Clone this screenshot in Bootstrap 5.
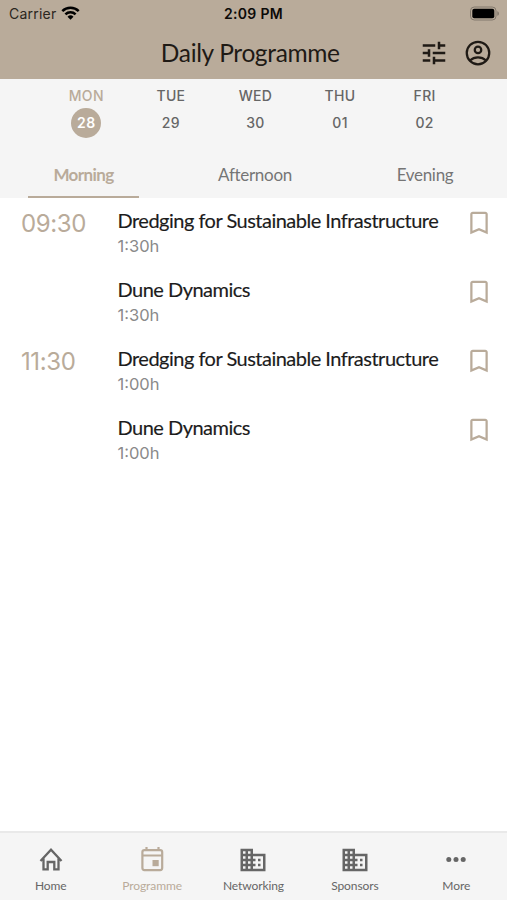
<!DOCTYPE html>
<html lang="en">
<head>
<meta charset="utf-8">
<meta name="viewport" content="width=device-width, initial-scale=1">
<title>Daily Programme</title>
<link href="https://cdn.jsdelivr.net/npm/bootstrap@5.3.0/dist/css/bootstrap.min.css" rel="stylesheet">
<style>
:root { --sand: #b9ab9a; --bar: #f5f5f5; --ink: #666; }
body { font-family: Lato, "Open Sans", sans-serif; color: #1c1c1c; background: #fff; }
svg { display: block; fill: currentColor; flex: none; }
.digits { font-family: Inter, "Liberation Sans", sans-serif; }
.top { background: var(--sand); height: 79px; color: #1f1a15; }
.status { height: 27px; font-size: 14px; line-height: 28px; color: #2b2620; padding: 0 7px 0 9px; display: grid; grid-template-columns: 1fr auto 1fr; }
.status .carrier { letter-spacing: .22px; }
.status .clock { font-weight: 600; letter-spacing: .3px; color: #0c0a08; margin-right: 2px; }
.title-row { height: 50px; display: grid; grid-template-columns: 1fr 180px 1fr; padding: 0 14.500px 0 8px; }
.title-row h1 { font-size: 24.5px; line-height: 51px; margin: 0; font-weight: 400; white-space: nowrap; letter-spacing: -.35px; }
.title-row .user { margin-left: 14px; }
.panel { background: var(--bar); height: 119px; color: var(--ink); }
.days { padding: 7px 40px 0 44px; height: 73px; }
.day { font-size: 14px; font-weight: 500; line-height: 20px; letter-spacing: .35px; }
.day .num { width: 30px; height: 30px; line-height: 30px; margin-top: 2px; border-radius: 50%; }
.day.on { color: var(--sand); }
.day.on .num { background: var(--sand); color: #fff; font-weight: 600; }
.parts { display: grid; grid-template-columns: 167px 176px 164px; height: 46px; font-size: 17px; line-height: 46px; letter-spacing: -.3px; color: #757575; }
.parts .on { color: var(--sand); font-weight: 700; width: 111px; height: 46px; border-bottom: 2px solid var(--sand); letter-spacing: -.6px; }
.item { height: 69px; padding: 10px 13px 0 21px; }
.item .at { width: 96.500px; font-size: 24px; line-height: 31px; color: var(--sand); letter-spacing: -.4px; }
.item .name { font-size: 20px; line-height: 24px; white-space: nowrap; letter-spacing: -.51px; -webkit-text-stroke: .15px; }
.item .len { font-size: 16.5px; line-height: 29px; color: #8a8a8a; }
.item svg { color: var(--sand); }
.bottom { height: 69px; background: var(--bar); border-top: 2px solid #e9e9e9; color: var(--ink); font-size: 12px; }
.bottom a { color: inherit; text-decoration: none; padding-top: 12px; line-height: 19px; width: 20%; letter-spacing: -.1px; }
.bottom a.on { color: var(--sand); }
.bottom svg { margin-bottom: 1px; }
</style>
<script src="https://cdn.jsdelivr.net/npm/bootstrap@5.3.0/dist/js/bootstrap.bundle.min.js"></script>
</head>
<body class="vh-100 d-flex flex-column overflow-hidden">
<svg class="d-none">
  <symbol id="i-bookmark" viewBox="0 0 24 24"><path d="M17 3H7c-1.100 0-2 .9-2 2v16l7-3 7 3V5c0-1.100-.9-2-2-2zm.2 15.200l-5.200-2.300-5.200 2.300V4.800h10.400z"/></symbol>
  <symbol id="i-office" viewBox="0 0 24 24"><path d="M12 7V3H2v18h20V7H12zM6 19H4v-2h2v2zm0-4H4v-2h2v2zm0-4H4V9h2v2zm0-4H4V5h2v2zm4 12H8v-2h2v2zm0-4H8v-2h2v2zm0-4H8V9h2v2zm0-4H8V5h2v2zm10 12h-8v-2h2v-2h-2v-2h2v-2h-2V9h8v10zm-2-8h-2v2h2v-2zm0 4h-2v2h2v-2z"/></symbol>
</svg>

<header class="top">
  <div class="status digits">
    <div class="d-flex align-items-center">
      <span class="carrier">Carrier</span>
      <svg class="ms-1" width="20" height="16" viewBox="0 0 20 16" style="color:#000"><g fill="none" stroke="currentColor" stroke-width="2.500"><path d="M2.300 5.200a11.600 11.600 0 0 1 16.400 0"/><path d="M5.400 8.400a7.200 7.200 0 0 1 10.200 0"/></g><path d="M10.500 13.800l-3-3.100a4.300 4.300 0 0 1 6 0z"/></svg>
    </div>
    <span class="clock">2:09 PM</span>
    <div class="d-flex justify-content-end align-items-center">
      <svg width="31" height="16" viewBox="0 0 31 16"><rect x="1.500" y="1" width="25.500" height="13" rx="3.800" fill="none" stroke="#82786c"/><rect x="3.300" y="2.800" width="22" height="9.400" rx="2" fill="#000"/><path d="M28.300 5.200c2.200.7 2.200 3.900 0 4.600z" fill="#82786c"/></svg>
    </div>
  </div>
  <div class="title-row">
    <span></span>
    <h1 class="text-center">Daily Programme</h1>
    <div class="d-flex justify-content-end align-items-center">
      <svg width="30" height="30" viewBox="0 0 24 24"><path d="M3 17v2h6v-2H3zM3 5v2h10V5H3zm10 16v-2h8v-2h-8v-2h-2v6h2zM7 9v2H3v2h4v2h2V9H7zm14 4v-2H11v2h10zm-6-4h2V7h4V5h-4V3h-2v6z"/></svg>
      <svg class="user" width="30" height="30" viewBox="0 0 24 24"><g fill="none" stroke="currentColor" stroke-width="1.800"><circle cx="12" cy="12" r="9"/><circle cx="12" cy="9.500" r="2.600"/><path d="M5.600 18c1.800-1.700 4-2.500 6.400-2.500s4.600.8 6.400 2.500"/></g></svg>
    </div>
  </div>
</header>

<section class="panel">
  <div class="days digits d-flex text-center">
    <div class="day on flex-fill w-100"><div>MON</div><div class="num mx-auto">28</div></div>
    <div class="day flex-fill w-100"><div>TUE</div><div class="num mx-auto">29</div></div>
    <div class="day flex-fill w-100"><div>WED</div><div class="num mx-auto">30</div></div>
    <div class="day flex-fill w-100"><div>THU</div><div class="num mx-auto">01</div></div>
    <div class="day flex-fill w-100"><div>FRI</div><div class="num mx-auto">02</div></div>
  </div>
  <div class="parts text-center">
    <div class="on mx-auto">Morning</div>
    <div>Afternoon</div>
    <div>Evening</div>
  </div>
</section>

<main class="flex-grow-1">
  <div class="item d-flex align-items-start"><div class="at digits">09:30</div><div class="flex-grow-1"><div class="name">Dredging for Sustainable Infrastructure</div><div class="len digits">1:30h</div></div><svg width="30" height="30"><use href="#i-bookmark"/></svg></div>
  <div class="item d-flex align-items-start"><div class="at digits"></div><div class="flex-grow-1"><div class="name">Dune Dynamics</div><div class="len digits">1:30h</div></div><svg width="30" height="30"><use href="#i-bookmark"/></svg></div>
  <div class="item d-flex align-items-start"><div class="at digits">11:30</div><div class="flex-grow-1"><div class="name">Dredging for Sustainable Infrastructure</div><div class="len digits">1:00h</div></div><svg width="30" height="30"><use href="#i-bookmark"/></svg></div>
  <div class="item d-flex align-items-start"><div class="at digits"></div><div class="flex-grow-1"><div class="name">Dune Dynamics</div><div class="len digits">1:00h</div></div><svg width="30" height="30"><use href="#i-bookmark"/></svg></div>
</main>

<nav class="bottom d-flex">
  <a href="#" class="d-flex flex-column align-items-center"><svg width="30" height="30" viewBox="0 0 30 30"><path d="M4.500 16L15 4.700 25.500 16M7.500 13.500V24.400h4.200v-7.400h6.600v7.400h4.200V13.500" fill="none" stroke="currentColor" stroke-width="2.300"/></svg>Home</a>
  <a href="#" class="on d-flex flex-column align-items-center"><svg width="30" height="30" viewBox="0 0 30 30"><path d="M9.500 2v4M21.500 2v4M5.500 10.500h20" stroke="currentColor" stroke-width="2.200"/><rect x="5.400" y="5.100" width="19.800" height="20" rx="2" fill="none" stroke="currentColor" stroke-width="2.200"/><rect x="15.500" y="15" width="6.200" height="6.200"/></svg>Programme</a>
  <a href="#" class="d-flex flex-column align-items-center"><svg width="30" height="30"><use href="#i-office"/></svg>Networking</a>
  <a href="#" class="d-flex flex-column align-items-center"><svg width="30" height="30"><use href="#i-office"/></svg>Sponsors</a>
  <a href="#" class="d-flex flex-column align-items-center"><svg width="30" height="30" viewBox="0 0 30 30"><circle cx="7.800" cy="14.500" r="2.500"/><circle cx="15" cy="14.500" r="2.500"/><circle cx="22.200" cy="14.500" r="2.500"/></svg>More</a>
</nav>
</body>
</html>
